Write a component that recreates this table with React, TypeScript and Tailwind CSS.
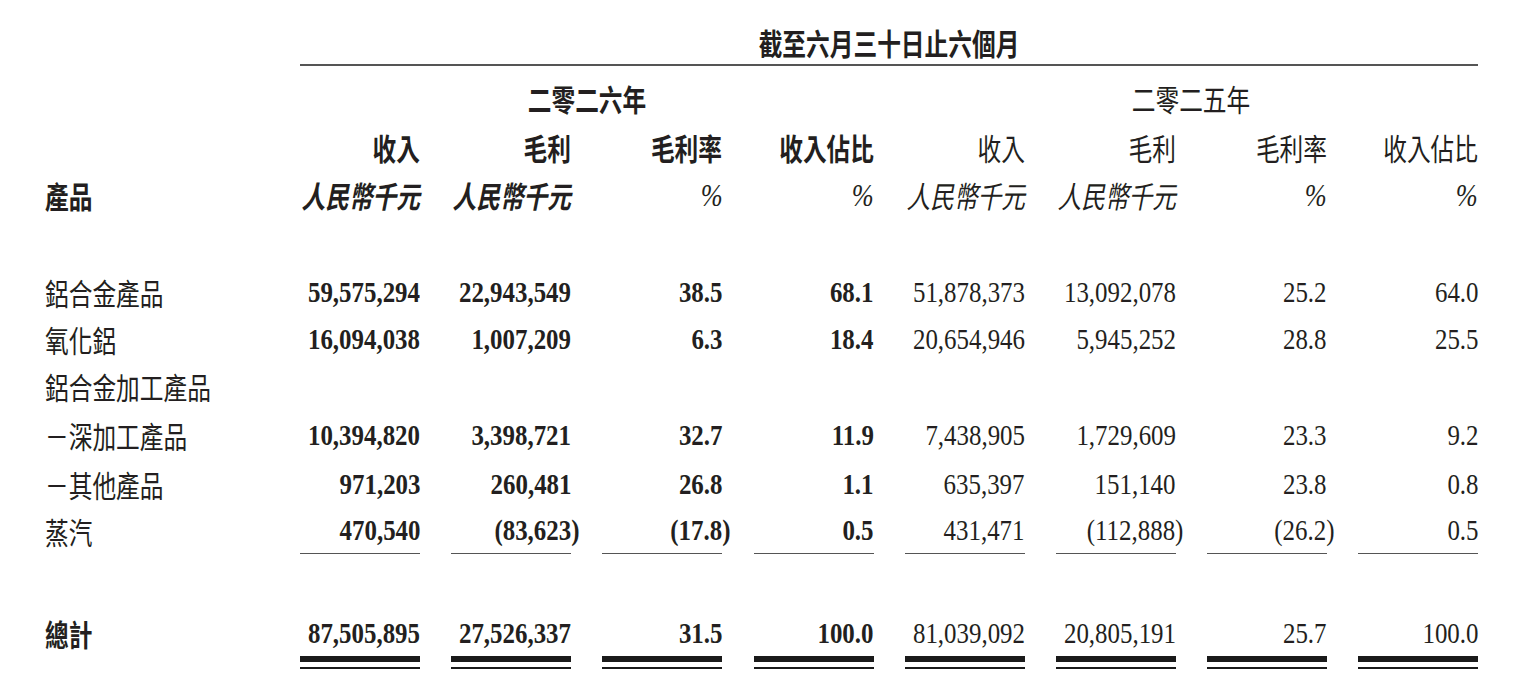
import React from "react";

const grid = "grid grid-cols-[224px_repeat(8,120px)] gap-x-[31.14px] pl-[45px]";
const cjk = "font-['Noto_Sans_CJK_TC','Noto_Sans_CJK_SC',sans-serif]";
const serif = "font-['Liberation_Serif','Times_New_Roman',serif]";

type Row = { label: string; values: string[] | null; h: string; last?: boolean };

const rows: Row[] = [
  { label: "鋁合金產品", h: "h-[48px]", values: ["59,575,294", "22,943,549", "38.5", "68.1", "51,878,373", "13,092,078", "25.2", "64.0"] },
  { label: "氧化鋁", h: "h-[46px]", values: ["16,094,038", "1,007,209", "6.3", "18.4", "20,654,946", "5,945,252", "28.8", "25.5"] },
  { label: "鋁合金加工產品", h: "h-[48px]", values: null },
  { label: "－深加工產品", h: "h-[50px]", values: ["10,394,820", "3,398,721", "32.7", "11.9", "7,438,905", "1,729,609", "23.3", "9.2"] },
  { label: "－其他產品", h: "h-[47px]", values: ["971,203", "260,481", "26.8", "1.1", "635,397", "151,140", "23.8", "0.8"] },
  { label: "蒸汽", h: "h-[47px]", last: true, values: ["470,540", "(83,623)", "(17.8)", "0.5", "431,471", "(112,888)", "(26.2)", "0.5"] },
];

const totals = ["87,505,895", "27,526,337", "31.5", "100.0", "81,039,092", "20,805,191", "25.7", "100.0"];

const heads = ["收入", "毛利", "毛利率", "收入佔比"];
const units = ["人民幣千元", "人民幣千元", "%", "%"];

function Num({ value, bold }: { value: string; bold: boolean }) {
  const paren = value.endsWith(")");
  return (
    <span
      className={`inline-block shrink-0 whitespace-nowrap origin-right scale-x-[0.83] text-[30px] leading-none ${serif} ${
        bold ? "font-bold" : "font-normal"
      } ${paren ? "-mr-[8px]" : ""}`}
    >
      {value}
    </span>
  );
}

function Zh({ text, bold, italic, origin = "origin-right" }: { text: string; bold?: boolean; italic?: boolean; origin?: string }) {
  return (
    <span
      className={`inline-block shrink-0 whitespace-nowrap scale-x-[0.79] text-[30px] leading-none ${origin} ${cjk} ${
        bold ? "font-bold" : "font-normal"
      } ${italic ? "italic" : ""}`}
    >
      {text}
    </span>
  );
}

function Unit({ text, bold }: { text: string; bold: boolean }) {
  if (text === "%") {
    return (
      <span className={`inline-block origin-right scale-x-[0.85] italic text-[31px] leading-none ${serif} font-normal`}>%</span>
    );
  }
  return <Zh text={text} bold={bold} italic />;
}

export default function App() {
  return (
    <main className="w-[1516px] h-[682px] overflow-hidden bg-white text-[#231f20]">
      <div className={`${grid} h-[66px]`}>
        <div />
        <div className="col-span-8 flex items-center justify-center border-b-2 border-[#555] pt-[20px]">
          <Zh text="截至六月三十日止六個月" bold origin="origin-center" />
        </div>
      </div>

      <div className={`${grid} h-[64px]`}>
        <div />
        <div className="col-span-4 flex items-center justify-center">
          <Zh text="二零二六年" bold origin="origin-center" />
        </div>
        <div className="col-span-4 flex items-center justify-center">
          <Zh text="二零二五年" origin="origin-center" />
        </div>
      </div>

      <div className={`${grid} h-[34px]`}>
        <div />
        {[0, 1].map((y) =>
          heads.map((h) => (
            <div key={`${y}-${h}`} className="flex items-center justify-end">
              <Zh text={h} bold={y === 0} />
            </div>
          ))
        )}
      </div>

      <div className={`${grid} h-[62px]`}>
        <div className="flex items-center">
          <Zh text="產品" bold origin="origin-left" />
        </div>
        {[0, 1].map((y) =>
          units.map((u, i) => (
            <div key={`${y}-${i}`} className="flex items-center justify-end">
              <Unit text={u} bold={y === 0} />
            </div>
          ))
        )}
      </div>

      <div className="h-[42px]" />

      {rows.map((r) => (
        <div key={r.label} className={`${grid} ${r.h}`}>
          <div className="flex items-center">
            <Zh text={r.label} origin="origin-left" />
          </div>
          {r.values
            ? r.values.map((v, i) => (
                <div
                  key={i}
                  className={`flex items-center justify-end ${r.last ? "border-b border-[#555]" : ""}`}
                >
                  <Num value={v} bold={i < 4} />
                </div>
              ))
            : null}
        </div>
      ))}

      <div className="h-[56px]" />

      <div className={`${grid} h-[46px]`}>
        <div className="flex items-center">
          <Zh text="總計" bold origin="origin-left" />
        </div>
        {totals.map((v, i) => (
          <div key={i} className="flex items-center justify-end">
            <Num value={v} bold={i < 4} />
          </div>
        ))}
      </div>

      <div className={grid}>
        <div />
        {totals.map((_, i) => (
          <div key={i} className="flex flex-col gap-[5px]">
            <div className="h-[6px] bg-[#1a1a1a]" />
            <div className="h-[2px] bg-[#1a1a1a]" />
          </div>
        ))}
      </div>
    </main>
  );
}
